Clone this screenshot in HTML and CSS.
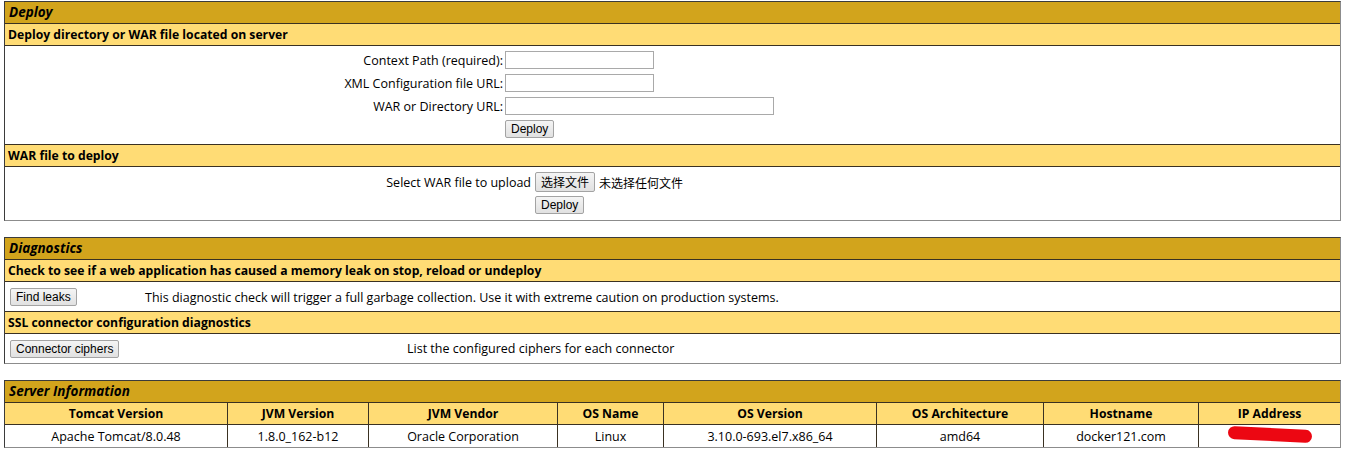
FILE: index.html
```html
<!DOCTYPE html>
<html lang="en">
<head>
<meta charset="utf-8">
<title>Tomcat Manager</title>
<link rel="stylesheet" href="styles.css">
</head>
<body>
<div class="page">
  <section class="panel">
    <div class="title">Deploy</div>
    <div class="header">Deploy directory or WAR file located on server</div>
    <div class="body deploy-body">
      <div class="form-grid">
        <label class="lbl">Context Path (required):</label>
        <div class="field"><input class="text w20" type="text"></div>
        <label class="lbl">XML Configuration file URL:</label>
        <div class="field"><input class="text w20" type="text"></div>
        <label class="lbl">WAR or Directory URL:</label>
        <div class="field"><input class="text w40" type="text"></div>
        <span class="lbl"></span>
        <div class="field"><button class="btn" type="button">Deploy</button></div>
      </div>
    </div>
    <div class="header">WAR file to deploy</div>
    <div class="body upload-body">
      <div class="upload-grid">
        <label class="lbl">Select WAR file to upload</label>
        <div class="field"><button class="btn file-btn" type="button">选择文件</button><span class="file-name">未选择任何文件</span></div>
        <span class="lbl"></span>
        <div class="field"><button class="btn" type="button">Deploy</button></div>
      </div>
    </div>
  </section>

  <section class="panel">
    <div class="title">Diagnostics</div>
    <div class="header">Check to see if a web application has caused a memory leak on stop, reload or undeploy</div>
    <div class="body diag-row leaks">
      <div class="field"><button class="btn" type="button">Find leaks</button></div>
      <div class="diag-text">This diagnostic check will trigger a full garbage collection. Use it with extreme caution on production systems.</div>
    </div>
    <div class="header">SSL connector configuration diagnostics</div>
    <div class="body diag-row ciphers">
      <div class="field"><button class="btn" type="button">Connector ciphers</button></div>
      <div class="diag-text">List the configured ciphers for each connector</div>
    </div>
  </section>

  <section class="panel">
    <div class="title">Server Information</div>
    <div class="info-grid">
      <div class="th">Tomcat Version</div>
      <div class="th">JVM Version</div>
      <div class="th">JVM Vendor</div>
      <div class="th">OS Name</div>
      <div class="th">OS Version</div>
      <div class="th">OS Architecture</div>
      <div class="th">Hostname</div>
      <div class="th">IP Address</div>
      <div class="td">Apache Tomcat/8.0.48</div>
      <div class="td">1.8.0_162-b12</div>
      <div class="td">Oracle Corporation</div>
      <div class="td">Linux</div>
      <div class="td">3.10.0-693.el7.x86_64</div>
      <div class="td">amd64</div>
      <div class="td">docker121.com</div>
      <div class="td ip"><span class="redact"></span></div>
    </div>
  </section>
</div>
</body>
</html>
```

FILE: styles.css
```css
* {
  box-sizing: border-box;
}

body {
  margin: 0;
  background: #ffffff;
  color: #000000;
  font-family: "Open Sans", "Noto Sans CJK SC", sans-serif;
  font-size: 12.5px;
}

.page {
  display: flex;
  flex-direction: column;
  gap: 16px;
  padding: 1px 4px 0 4px;
}

.panel {
  border: 1px solid;
  border-color: #3b3b3b #8c8c8c #8c8c8c #3b3b3b;
}

.title {
  height: 22px;
  line-height: 21px;
  padding: 0 4px;
  background: #d2a41c;
  border-bottom: 1px solid #3a3122;
  font-style: italic;
  font-weight: bold;
  font-size: 13.5px;
}

.header {
  height: 22px;
  line-height: 21px;
  padding: 0 3px;
  background: #ffdc75;
  border-bottom: 1px solid #3a3122;
  font-weight: bold;
  font-size: 12.2px;
}

.body {
  border-bottom: 1px solid #3a3122;
}

.panel > .body:last-child {
  border-bottom: none;
}

.deploy-body {
  height: 99px;
  padding-top: 5px;
}

.form-grid {
  display: grid;
  grid-template-columns: 498px 1fr;
  column-gap: 2px;
  row-gap: 5px;
}

.upload-body {
  height: 53px;
  padding-top: 5px;
}

.upload-grid {
  display: grid;
  grid-template-columns: 526px 1fr;
  column-gap: 4px;
  row-gap: 4px;
}

.lbl {
  text-align: right;
  display: flex;
  align-items: center;
  justify-content: flex-end;
}

.field {
  display: flex;
  align-items: center;
}

.text {
  height: 18px;
  border: 1px solid #a9a9a9;
  background: #ffffff;
  padding: 0 2px;
  margin: 0;
}

.w20 {
  width: 149px;
}

.w40 {
  width: 269px;
}

.btn {
  height: 18px;
  margin: 0;
  padding: 0 5px;
  border: 1px solid #a3a3a3;
  border-radius: 2px;
  background: linear-gradient(#f4f4f4, #e1e1e1);
  color: #000000;
  font-family: "Liberation Sans", Arial, sans-serif;
  font-size: 12px;
  line-height: 16px;
}

.file-btn {
  height: 20px;
  width: 60px;
  padding: 0;
  font-family: "Noto Sans CJK SC", sans-serif;
  font-size: 12px;
}

.file-name {
  margin-left: 4px;
  font-family: "Noto Sans CJK SC", sans-serif;
  font-size: 12px;
}

.diag-row {
  display: grid;
  align-items: center;
  padding-left: 5px;
}

.leaks {
  height: 30px;
  padding-top: 1px;
  grid-template-columns: 135px 1fr;
}

.ciphers {
  height: 29px;
  grid-template-columns: 397px 1fr;
}

.info-grid {
  display: grid;
  grid-template-columns: 222px 141px 189px 106px 213px 167px 155px 1fr;
}

.th,
.td {
  height: 22px;
  line-height: 21px;
  text-align: center;
  border-left: 1px solid #3a3122;
  white-space: nowrap;
}

.th:nth-child(8n + 1),
.td:nth-child(8n + 1) {
  border-left: none;
}

.th {
  background: #ffdc75;
  font-weight: bold;
  font-size: 12.2px;
  border-bottom: 1px solid #3a3122;
}

.td {
  padding-top: 1px;
}

.ip {
  position: relative;
}

.redact {
  position: absolute;
  left: 29px;
  top: 3px;
  width: 84px;
  height: 13px;
  border-radius: 7px;
  background: #ec0712;
  transform: rotate(3deg);
}
```
